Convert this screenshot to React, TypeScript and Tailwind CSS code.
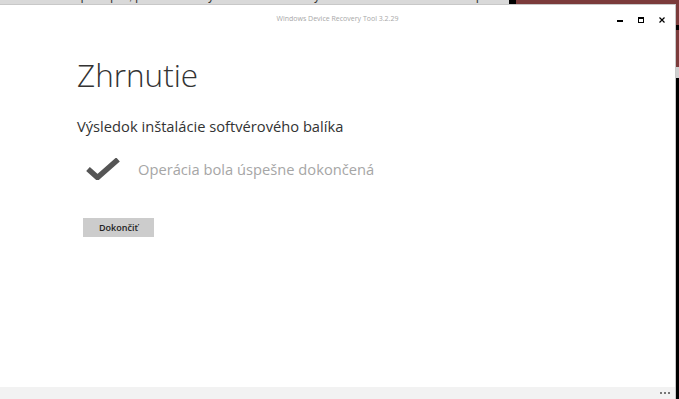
import React from 'react';

function CheckMark() {
  return (
    <svg width="34" height="22" viewBox="0 0 34 22" className="shrink-0">
      <path d="M2 11 L11.5 19.5 L32 1.5" fill="none" stroke="#555555" strokeWidth="5.5" strokeLinejoin="miter" />
    </svg>
  );
}

export default function App() {
  return (
    <div className="w-[679px] h-[399px] bg-black flex flex-col overflow-hidden font-['Open_Sans',sans-serif]">
      {/* background window peeking out at the top */}
      <div className="h-[4px] flex shrink-0 overflow-hidden">
        <div className="w-[509px] bg-[#d9d9d9] overflow-hidden">
          <div className="-mt-[11px] text-[12px] leading-[15px] text-[#333] whitespace-nowrap font-['Liberation_Sans',sans-serif]">
            zeme niekoľko postupov, pomocou ktorých môžete v krízových situáciach reštartovať váš prístroj či obnoviť
          </div>
        </div>
        <div className="w-[7px] bg-black" />
        <div className="flex-1 bg-[#7b3b3b]" />
      </div>

      <div className="flex flex-1 min-h-0">
        {/* main window */}
        <div className="w-[676px] bg-white border-t border-r border-[#c8c8c8] flex flex-col">
          <div className="h-[27px] flex items-center relative shrink-0">
            <div className="flex-1 text-center text-[7px] text-[#a8a8a8] pt-[1px]">
              Windows Device Recovery Tool 3.2.29
            </div>
            <div className="absolute right-[10px] top-[12px] flex items-end gap-[15px]">
              <div className="w-[6px] h-[2px] bg-black mb-[1px]" />
              <div className="w-[6px] h-[6px] border border-black border-t-2" />
              <svg width="6" height="6" viewBox="0 0 6 6">
                <path d="M0.5 0.5 L5.5 5.5 M5.5 0.5 L0.5 5.5" stroke="#000" strokeWidth="1.2" />
              </svg>
            </div>
          </div>

          <div className="flex-1 pl-[77px] pt-[23px]">
            <h1 className="text-[31.5px] leading-[40px] font-light text-[#333]">Zhrnutie</h1>
            <p className="mt-[21px] text-[14.7px] leading-[20px] text-[#333]">
              Výsledok inštalácie softvérového balíka
            </p>
            <div className="mt-[22px] ml-[9px] flex items-center gap-[18px]">
              <CheckMark />
              <span className="text-[14.7px] leading-[22px] text-[#a6a6a6]">Operácia bola úspešne dokončená</span>
            </div>
            <button className="mt-[38px] ml-[6px] w-[71px] h-[19px] bg-[#cccccc] text-[9px] font-semibold text-[#222] flex items-center justify-center">
              Dokončiť
            </button>
          </div>

          <div className="h-[12px] bg-[#f2f2f2] flex items-center justify-end pr-[5px] gap-[2px] shrink-0">
            <div className="w-[2px] h-[2px] bg-[#777]" />
            <div className="w-[2px] h-[2px] bg-[#777]" />
            <div className="w-[2px] h-[2px] bg-[#777]" />
          </div>
        </div>

        {/* desktop strip at the right */}
        <div className="flex-1 flex flex-col">
          <div className="h-[21px] bg-[#7b3b3b]" />
          <div className="h-[5px] bg-black" />
          <div className="h-[37px] bg-[#7b3b3b]" />
          <div className="h-[11px] bg-[#cfcfcf]" />
          <div className="flex-1 bg-black" />
        </div>
      </div>
    </div>
  );
}
